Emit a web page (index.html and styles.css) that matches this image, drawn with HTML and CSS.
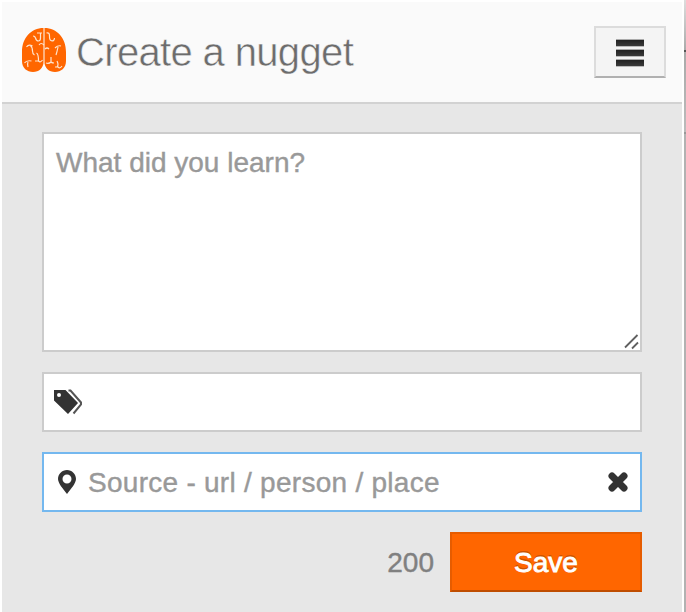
FILE: index.html
```html
<!DOCTYPE html>
<html lang="en">
<head>
<meta charset="utf-8">
<title>Create a nugget</title>
<link rel="stylesheet" href="styles.css">
</head>
<body>
<main class="popup">
  <header class="header">
    <svg class="logo" viewBox="0 0 44 44" aria-hidden="true">
      <path fill="#ff6600" d="M21.500 0C9 0 0 10 0 24v9c0 7 5 11 11 11s10.500-4 10.500-10zM22.500 0C35 0 44 10 44 24v9c0 7-5 11-11 11s-10.500-4-10.500-10z"/>
      <path fill="none" stroke="#ffb27c" d="M22 0v36"/>
      <path class="folds" d="M11 8q2 0 2.500 2c1 4 5 4 5 0V5M15 5h5M24.500 5q3-1 3 3v1c0 5 5 5 5 1M4.500 19q2-3 6-1M8.500 18q2 1 2 5 0 3 2 4M17 17q2-3 5 0M14.500 25c2 1 2 5 2 8q2 2 4-1M13 33h4M2.500 35q2-3 7-2M6 34q-1 2 0 5M23 21q2-2 4 0M29 29v5q-2 2-5 1M29 34q1 1 3 1M33 20q3-3 6-2M36 19q-1 5-2 8M35 33q2 4 0 6M33 39h3q2 2 4-1"/>
    </svg>
    <h1 class="title">Create a nugget</h1>
    <button class="menu" type="button" aria-label="Menu"><span class="bar"></span><span class="bar"></span><span class="bar"></span></button>
  </header>
  <form class="form">
    <div class="box note">
      <span>What did you learn?</span>
      <svg class="grip" viewBox="0 0 16 16" aria-hidden="true"><path d="M1 13.500L13.500 1M8 14.500l6-6"/></svg>
    </div>
    <div class="box field">
      <svg class="tags" viewBox="0 0 28 26" aria-hidden="true">
        <path fill="#333" fill-rule="evenodd" d="M0 1h11.500L24 14 14 25 0 11.500zm5 3a2 2 0 1 0 0 4 2 2 0 0 0 0-4z"/>
        <path fill="none" stroke="#555" stroke-width="2" d="M14.500 1.500h2L27 13.500v2L19.500 24.500"/>
      </svg>
    </div>
    <div class="box field focused">
      <svg class="pin" viewBox="0 0 18 24" aria-hidden="true"><path fill="#333" fill-rule="evenodd" d="M9 0C4 0 0 4 0 9c0 4 5 10 9 15 4-5 9-11 9-15 0-5-4-9-9-9zm0 4.500a4.500 4.500 0 1 1 0 9 4.500 4.500 0 0 1 0-9z"/></svg>
      <span class="source">Source - url / person / place</span>
      <svg class="clear" viewBox="0 0 20 20" aria-hidden="true"><path d="M4 4l12 12M16 4L4 16"/></svg>
    </div>
    <div class="actions">
      <span class="count">200</span>
      <button class="save" type="button">Save</button>
    </div>
  </form>
</main>
<aside class="edge"></aside>
</body>
</html>
```
FILE: styles.css
```css
* { box-sizing: border-box; }
body {
  margin: 0;
  height: 612px;
  overflow: hidden;
  display: flex;
  background: #fff;
  font-family: "Liberation Sans", Arial, sans-serif;
  font-size: 28px;
}
.popup {
  width: 684px;
  border: 2px solid #fff;
  border-bottom: 0;
  background: #e7e7e7;
}
.edge {
  width: 2px;
  background: linear-gradient(#ddd 0, #aaa 50px, #555 50px, #555 52px, #aaa 52px, #bbb 132px, #999 132px, #999 134px, #b2b2b2 134px);
}
.header {
  height: 102px;
  display: flex;
  align-items: center;
  padding: 0 16px 0 20px;
  background: #fafafa;
  border-bottom: 2px solid #d2d2d2;
}
.logo { width: 44px; height: 44px; margin-top: -4px; }
.folds { fill: none; stroke: #ffe3cc; stroke-width: 1.2; }
.title {
  margin: 0 auto 0 10px;
  color: #6c6c6c;
  font-size: 40px;
  font-weight: 400;
  line-height: 48px;
  letter-spacing: -0.65px;
  -webkit-text-stroke: 0.5px #fafafa;
}
.menu {
  width: 72px;
  height: 52px;
  padding: 1px 0 0;
  display: flex;
  flex-direction: column;
  align-items: center;
  justify-content: center;
  gap: 4px;
  background: #f4f4f4;
  border: 2px solid #dcdcdc;
  border-bottom-color: #b0b0b0;
}
.bar {
  width: 28px;
  height: 6px;
  background: linear-gradient(#222, #3a3a3a);
  box-shadow: 0 -1px #aaa, 0 1px #bbb;
}
.form {
  display: flex;
  flex-direction: column;
  gap: 20px;
  padding: 28px 40px 0;
}
.box {
  background: #fff;
  border: 2px solid #ccc;
  color: #999;
  -webkit-text-stroke: 0.4px #999;
}
.note {
  position: relative;
  height: 220px;
  padding: 13px 12px;
  line-height: 32px;
}
.grip {
  position: absolute;
  right: 0;
  bottom: 0;
  width: 16px;
  height: 16px;
  fill: none;
  stroke: #606060;
  stroke-width: 1.8;
}
.field {
  height: 60px;
  display: flex;
  align-items: center;
  padding: 0 12px 0 10px;
}
.focused { border-color: #74b8ef; }
.source { padding-top: 2px; letter-spacing: 0.27px; }
.tags { width: 28px; height: 26px; }
.pin { width: 18px; height: 24px; margin: 0 12px 0 4px; }
.clear {
  width: 20px;
  height: 20px;
  margin-left: auto;
  fill: none;
  stroke: #333;
  stroke-width: 7;
  stroke-linecap: square;
  stroke-linecap: round;
}
.actions {
  display: flex;
  align-items: center;
  justify-content: flex-end;
  gap: 16px;
}
.count { padding-top: 2px; color: #808080; -webkit-text-stroke: 0.4px #808080; }
.save {
  width: 192px;
  height: 60px;
  padding: 2px 0 0;
  background: #ff6600;
  border: 2px solid #e65c00;
  border-bottom-color: #bf4d00;
  color: #fff;
  font: inherit;
  -webkit-text-stroke: 0.9px #fff;
  text-shadow: 0 -2px 0 #cc5200;
}
```
